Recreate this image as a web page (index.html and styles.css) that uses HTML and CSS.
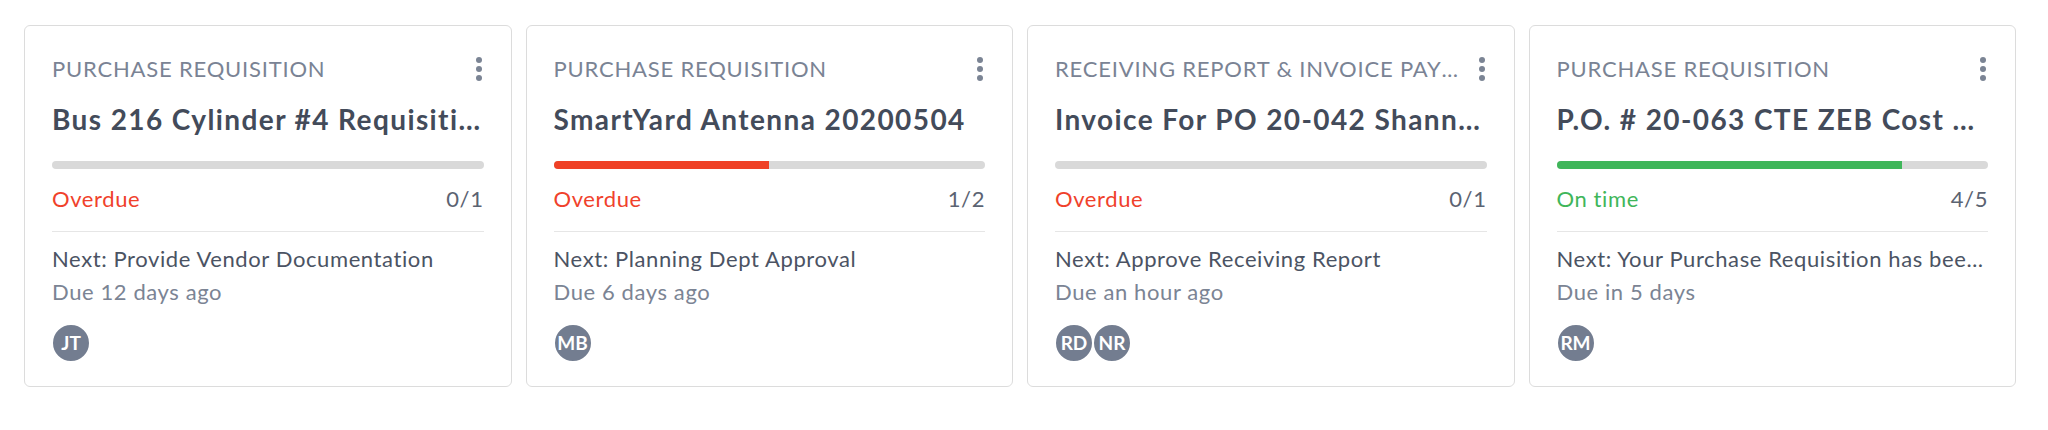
FILE: index.html
```html
<!DOCTYPE html>
<html lang="en">

    <head>
        <meta charset="UTF-8">
        <meta name="viewport" content="width=device-width, initial-scale=1.0">
        <title>Workflows</title>
        <link rel="stylesheet" href="styles.css">
    </head>

    <body>
        <div class="cards">
            <div class="card">
                <div class="card-head">
                    <p class="type">PURCHASE REQUISITION</p>
                    <svg class="menu" width="8" height="26" viewBox="0 0 8 26"><circle cx="4" cy="4" r="3"/><circle cx="4" cy="13" r="3"/><circle cx="4" cy="22" r="3"/></svg>
                </div>
                <h2 class="title">Bus 216 Cylinder #4 Requisition for Fleet Maintenance</h2>
                <div class="bar"></div>
                <div class="status">
                    <span class="overdue">Overdue</span>
                    <span class="count">0/1</span>
                </div>
                <p class="next">Next: Provide Vendor Documentation</p>
                <p class="due">Due 12 days ago</p>
                <div class="avatars">
                    <span class="avatar">JT</span>
                </div>
            </div>
            <div class="card">
                <div class="card-head">
                    <p class="type">PURCHASE REQUISITION</p>
                    <svg class="menu" width="8" height="26" viewBox="0 0 8 26"><circle cx="4" cy="4" r="3"/><circle cx="4" cy="13" r="3"/><circle cx="4" cy="22" r="3"/></svg>
                </div>
                <h2 class="title">SmartYard Antenna 20200504</h2>
                <div class="bar"><div class="fill red" style="width: 50%"></div></div>
                <div class="status">
                    <span class="overdue">Overdue</span>
                    <span class="count">1/2</span>
                </div>
                <p class="next">Next: Planning Dept Approval</p>
                <p class="due">Due 6 days ago</p>
                <div class="avatars">
                    <span class="avatar">MB</span>
                </div>
            </div>
            <div class="card">
                <div class="card-head">
                    <p class="type">RECEIVING REPORT &amp; INVOICE PAYMENT</p>
                    <svg class="menu" width="8" height="26" viewBox="0 0 8 26"><circle cx="4" cy="4" r="3"/><circle cx="4" cy="13" r="3"/><circle cx="4" cy="22" r="3"/></svg>
                </div>
                <h2 class="title">Invoice For PO 20-042 Shannon Supply</h2>
                <div class="bar"></div>
                <div class="status">
                    <span class="overdue">Overdue</span>
                    <span class="count">0/1</span>
                </div>
                <p class="next">Next: Approve Receiving Report</p>
                <p class="due">Due an hour ago</p>
                <div class="avatars">
                    <span class="avatar">RD</span>
                    <span class="avatar">NR</span>
                </div>
            </div>
            <div class="card">
                <div class="card-head">
                    <p class="type">PURCHASE REQUISITION</p>
                    <svg class="menu" width="8" height="26" viewBox="0 0 8 26"><circle cx="4" cy="4" r="3"/><circle cx="4" cy="13" r="3"/><circle cx="4" cy="22" r="3"/></svg>
                </div>
                <h2 class="title">P.O. # 20-063 CTE ZEB Cost Estimate Study</h2>
                <div class="bar"><div class="fill green" style="width: 80%"></div></div>
                <div class="status">
                    <span class="ontime">On time</span>
                    <span class="count">4/5</span>
                </div>
                <p class="next">Next: Your Purchase Requisition has been approved</p>
                <p class="due">Due in 5 days</p>
                <div class="avatars">
                    <span class="avatar">RM</span>
                </div>
            </div>
        </div>
    </body>

</html>
```

FILE: styles.css
```css
* {
    margin: 0;
    padding: 0;
    box-sizing: border-box;
    font-family: 'Lato', 'Noto Sans', sans-serif;
}

body {
    background-color: #ffffff;
}

.cards {
    display: flex;
    gap: 14px;
    padding: 25px 32px 0 24px;
}

.card {
    flex: 1;
    min-width: 0;
    height: 362px;
    border: 1px solid #dcdcdc;
    border-radius: 6px;
    padding: 28px 27px 23px 27px;
    display: flex;
    flex-direction: column;
}

.card-head {
    display: flex;
    align-items: center;
    gap: 12px;
}

.type {
    flex: 1;
    min-width: 0;
    font-size: 22px;
    line-height: 30px;
    letter-spacing: 0.8px;
    color: #7a8394;
    white-space: nowrap;
    overflow: hidden;
    text-overflow: ellipsis;
}

.menu {
    fill: #7b8494;
    flex-shrink: 0;
    margin-right: 1px;
}

.title {
    margin-top: 17px;
    font-size: 28px;
    line-height: 36px;
    letter-spacing: 1.4px;
    font-weight: 700;
    color: #434b5a;
    white-space: nowrap;
    overflow: hidden;
    text-overflow: ellipsis;
}

.bar {
    margin-top: 24px;
    height: 9px;
    border-radius: 5px;
    background-color: #d9d9d9;
    overflow: hidden;
}

.fill {
    height: 100%;
}

.red {
    background-color: #ef4126;
}

.green {
    background-color: #3fb65a;
}

.status {
    display: flex;
    justify-content: space-between;
    margin-top: 15px;
    padding-bottom: 17px;
    border-bottom: 1px solid #e6e6e6;
    font-size: 22px;
    line-height: 30px;
    letter-spacing: 0.6px;
}

.overdue {
    color: #f0412b;
}

.ontime {
    color: #3fb65a;
}

.count {
    color: #5b6372;
}

.next {
    margin-top: 12px;
    font-size: 22px;
    line-height: 30px;
    letter-spacing: 0.6px;
    color: #4b5363;
    white-space: nowrap;
    overflow: hidden;
    text-overflow: ellipsis;
}

.due {
    margin-top: 3px;
    font-size: 22px;
    line-height: 30px;
    letter-spacing: 0.6px;
    color: #7b8494;
}

.avatars {
    display: flex;
    margin-top: 16px;
}

.avatar {
    width: 40px;
    height: 40px;
    border-radius: 50%;
    background-color: #737d90;
    border: 2px solid #ffffff;
    margin-left: -1px;
    color: #ffffff;
    font-size: 19px;
    font-weight: 700;
    display: flex;
    align-items: center;
    justify-content: center;
}

.avatar + .avatar {
    margin-left: -2px;
}
```
